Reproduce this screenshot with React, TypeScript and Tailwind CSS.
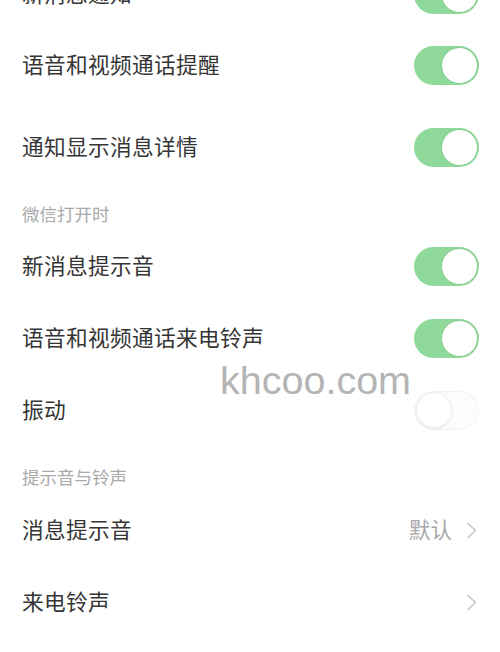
type ToggleRow = { kind: "toggle"; label: string; on: boolean; h: string };
type LinkRow = { kind: "link"; label: string; value?: string; h: string };
type Header = { kind: "header"; label: string; h: string };
type Item = ToggleRow | LinkRow | Header;

const items: Item[] = [
  { kind: "toggle", label: "新消息通知", on: true, h: "-mt-[42px] h-[72px]" },
  { kind: "toggle", label: "语音和视频通话提醒", on: true, h: "h-[71px]" },
  { kind: "toggle", label: "通知显示消息详情", on: true, h: "h-[92px]" },
  { kind: "header", label: "微信打开时", h: "h-[37px] pt-[12px]" },
  { kind: "toggle", label: "新消息提示音", on: true, h: "h-[72px]" },
  { kind: "toggle", label: "语音和视频通话来电铃声", on: true, h: "h-[72px]" },
  { kind: "toggle", label: "振动", on: false, h: "h-[72px]" },
  { kind: "header", label: "提示音与铃声", h: "h-[48px] pt-[22px]" },
  { kind: "link", label: "消息提示音", value: "默认", h: "h-[72px]" },
  { kind: "link", label: "来电铃声", h: "h-[72px]" },
];

function Switch({ on }: { on: boolean }) {
  if (on) {
    return (
      <div className="flex h-[39px] w-[65px] items-center justify-end rounded-full bg-[#8fd99b] pr-[1px]">
        <div className="h-[37px] w-[37px] rounded-full border-[1.5px] border-[#80cc8c] bg-white" />
      </div>
    );
  }
  return (
    <div className="flex h-[39px] w-[65px] items-center justify-start rounded-full border border-[#f3f3f3] bg-[#fcfcfc] pl-[1px]">
      <div className="h-[36px] w-[36px] rounded-full border border-[#efefef] bg-white shadow-[0_1px_3px_rgba(0,0,0,0.08)]" />
    </div>
  );
}

function Chevron() {
  return (
    <svg width="11" height="17" viewBox="0 0 11 17" className="mr-[2px]">
      <polyline points="1.5,1 9.5,8.5 1.5,16" fill="none" stroke="#c6c6c6" strokeWidth="1.5" />
    </svg>
  );
}

export default function App() {
  return (
    <div
      className="relative h-[652px] w-[500px] overflow-hidden bg-white"
      style={{ fontFamily: '"Noto Sans CJK SC", "Noto Sans", sans-serif' }}
    >
      <div className="flex flex-col">
        {items.map((it) => {
          if (it.kind === "header") {
            return (
              <div key={it.label} className={`${it.h} pl-[22px] text-[17.5px] leading-[18px] text-[#a9a9a9]`}>
                {it.label}
              </div>
            );
          }
          return (
            <div key={it.label} className={`${it.h} flex items-center justify-between pl-[22px] pr-[21px]`}>
              <span className="-mt-[3px] text-[21.7px] leading-none tracking-[0.3px] text-[#353535]">{it.label}</span>
              {it.kind === "toggle" ? (
                <Switch on={it.on} />
              ) : (
                <div className="flex items-center gap-[14px]">
                  {it.value && <span className="-mt-[3px] text-[21.5px] leading-none text-[#a8a8a8]">{it.value}</span>}
                  <Chevron />
                </div>
              )}
            </div>
          );
        })}
      </div>
      <span
        className="pointer-events-none absolute left-[220px] top-[356px] text-[39.5px] leading-[48px] text-[#b4b4b4]"
        style={{ fontFamily: '"Liberation Sans", Arial, sans-serif' }}
      >
        khcoo.com
      </span>
    </div>
  );
}
